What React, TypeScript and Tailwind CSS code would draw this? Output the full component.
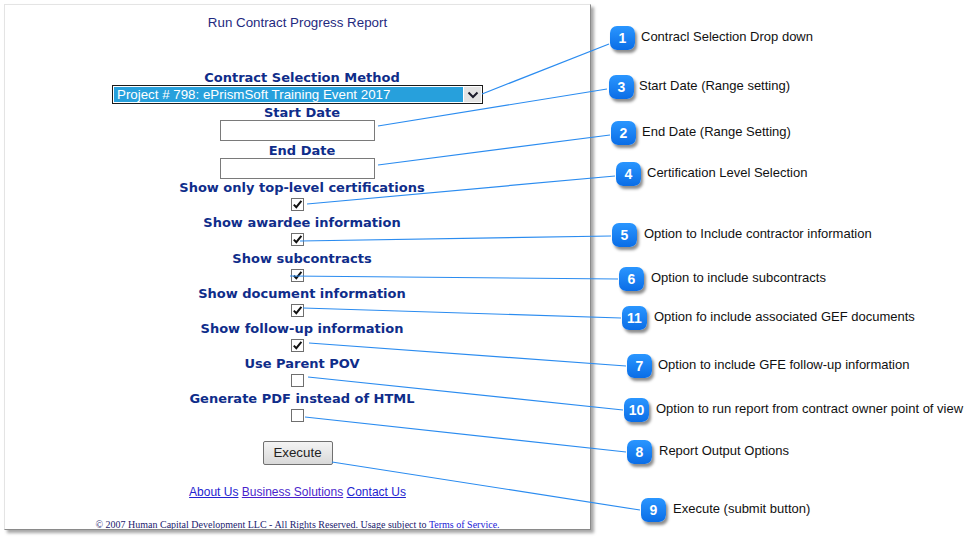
import React from 'react';

type Callout = {
  n: string;
  cx: number;
  cy: number;
  tx: number;
  text: string;
  from: [number, number];
  to: [number, number];
};

const callouts: Callout[] = [
  { n: '1', cx: 622, cy: 38, tx: 641, text: 'Contracl Selection Drop down', from: [482, 94], to: [609, 44] },
  { n: '3', cx: 621, cy: 87, tx: 639, text: 'Start Date (Range setting)', from: [378, 126], to: [607, 89] },
  { n: '2', cx: 623, cy: 133, tx: 642, text: 'End Date (Range Setting)', from: [378, 165], to: [610, 135] },
  { n: '4', cx: 628, cy: 174, tx: 647, text: 'Certification Level Selection', from: [307, 204], to: [615, 176] },
  { n: '5', cx: 624, cy: 235, tx: 644, text: 'Option to Include contractor information', from: [300, 241], to: [611, 236] },
  { n: '6', cx: 631, cy: 279, tx: 651, text: 'Option to include subcontracts', from: [290, 276], to: [618, 279] },
  { n: '11', cx: 634, cy: 318, tx: 654, text: 'Option fo include associated GEF documents', from: [303, 308], to: [621, 318] },
  { n: '7', cx: 639, cy: 366, tx: 658, text: 'Option to include GFE follow-up information', from: [309, 343], to: [626, 366] },
  { n: '10', cx: 636, cy: 410, tx: 656, text: 'Option to run report from contract owner point of view', from: [308, 377], to: [623, 410] },
  { n: '8', cx: 639, cy: 452, tx: 659, text: 'Report Output Options', from: [305, 417], to: [626, 452] },
  { n: '9', cx: 653, cy: 510, tx: 673, text: 'Execute (submit button)', from: [332, 462], to: [640, 510] },
];

const options = [
  { label: 'Show only top-level certifications', checked: true },
  { label: 'Show awardee information', checked: true },
  { label: 'Show subcontracts', checked: true },
  { label: 'Show document information', checked: true },
  { label: 'Show follow-up information', checked: true },
  { label: 'Use Parent POV', checked: false },
  { label: 'Generate PDF instead of HTML', checked: false },
];

const labelCls =
  "pl-[9px] pt-[1px] h-[16px] font-['Verdana','DejaVu_Sans',sans-serif] font-bold text-[13px] leading-[16px] text-[#0f2d8a] whitespace-nowrap";

function Check({ checked }: { checked: boolean }) {
  return (
    <div className="mt-[3px] mb-[3px] w-[13px] h-[13px] border border-[#6f6f6f] bg-white flex items-center justify-center">
      {checked && (
        <svg width="11" height="11" viewBox="0 0 11 11">
          <path d="M1.8 5.6 L4.3 8.2 L9.4 1.8" fill="none" stroke="#111" strokeWidth="2" />
        </svg>
      )}
    </div>
  );
}

function ReportForm() {
  return (
    <div className="ml-[4px] mt-[4px] w-[587px] h-[526px] overflow-hidden bg-white border-t border-l border-[#e4e4e4] border-r border-b border-r-[#8a8a8a] border-b-[#8a8a8a] shadow-[3px_3px_3px_rgba(0,0,0,0.35)]">
      <div className="flex flex-col items-center">
        <div className="mt-[10px] font-['Liberation_Sans',Arial,sans-serif] text-[13.33px] leading-[16px] text-[#1f2a80]">
          Run Contract Progress Report
        </div>

        <div className={`${labelCls} mt-[38px]`}>Contract Selection Method</div>
        <div className="w-[371px] h-[19px] border border-[#1a1a1a] bg-white p-[1px] flex">
          <div className="flex-1 bg-[#27a0dc] text-white font-['Liberation_Sans',Arial,sans-serif] text-[13.33px] leading-[15px] pl-[3px]">
            Project # 798: ePrismSoft Training Event 2017
          </div>
          <div className="w-[17px] ml-[1px] bg-[#e3e3e3] flex items-center justify-center">
            <svg width="12" height="8" viewBox="0 0 12 8">
              <path d="M1.5 1.5 L6 6 L10.5 1.5" fill="none" stroke="#1c1c2c" strokeWidth="2" />
            </svg>
          </div>
        </div>

        <div className={labelCls}>Start Date</div>
        <div className="w-[155px] h-[21px] border border-[#7a7a7a] bg-white" />
        <div className={`${labelCls} mt-[1px]`}>End Date</div>
        <div className="w-[155px] h-[21px] border border-[#7a7a7a] bg-white" />

        {options.map((o, i) => (
          <div key={o.label} className={i === 2 ? 'mt-[1px] flex flex-col items-center' : 'flex flex-col items-center'}>
            <div className={labelCls}>{o.label}</div>
            <Check checked={o.checked} />
          </div>
        ))}

        <button className="mt-[16px] w-[70px] h-[24px] border border-[#707070] rounded-[2px] bg-gradient-to-b from-[#f4f4f4] to-[#d9d9d9] font-['Liberation_Sans',Arial,sans-serif] text-[13.33px] text-[#222]">
          Execute
        </button>

        <div className="mt-[20px] font-['Liberation_Sans',Arial,sans-serif] text-[12px] leading-[15px] whitespace-nowrap">
          <span className="underline text-[#2323d0]">About Us</span>{' '}
          <span className="underline text-[#4a1fcc]">Business Solutions</span>{' '}
          <span className="underline text-[#2323d0]">Contact Us</span>
        </div>

        <div className="mt-[19px] font-['Liberation_Serif','Times_New_Roman',serif] text-[10px] leading-[12px] text-[#1a1a6e] whitespace-nowrap">
          © 2007 Human Capital Development LLC - All Rights Reserved. Usage subject to{' '}
          <span className="text-[#1a1ad6]">Terms of Service.</span>
        </div>
      </div>
    </div>
  );
}

export default function App() {
  return (
    <div className="relative w-[976px] h-[538px] bg-white overflow-hidden">
      <ReportForm />

      <svg className="absolute inset-0 pointer-events-none" width="976" height="538">
        {callouts.map((c) => (
          <line
            key={c.n}
            x1={c.from[0]}
            y1={c.from[1]}
            x2={c.to[0]}
            y2={c.to[1]}
            stroke="#2b8cf0"
            strokeWidth="1.2"
          />
        ))}
      </svg>

      {callouts.map((c) => (
        <React.Fragment key={c.n}>
          <div
            className="absolute w-[25px] h-[24px] rounded-[7px] bg-gradient-to-b from-[#2a96ff] to-[#0a6de6] shadow-[2px_3px_3px_rgba(0,0,0,0.45)] flex items-center justify-center text-white font-bold font-['Liberation_Sans',Arial,sans-serif] text-[14px]"
            style={{ left: c.cx - 12, top: c.cy - 12 }}
          >
            {c.n}
          </div>
          <div
            className="absolute font-['Liberation_Sans',Arial,sans-serif] text-[13px] leading-[16px] text-[#111] whitespace-nowrap"
            style={{ left: c.tx, top: c.cy - 9 }}
          >
            {c.text}
          </div>
        </React.Fragment>
      ))}
    </div>
  );
}
